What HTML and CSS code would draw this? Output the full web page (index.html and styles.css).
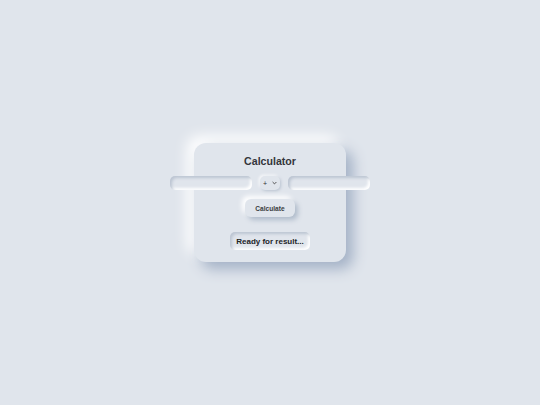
FILE: index.html
```html
<!DOCTYPE html>
<html>
<head>
<meta charset="utf-8">
<link rel="stylesheet" href="styles.css">
</head>
<body>
<div class="card">
  <h1 class="title">Calculator</h1>
  <div class="row">
    <input class="field" type="text">
    <div class="op">
      <select class="op-select"><option>+</option><option>-</option><option>×</option><option>÷</option></select>
      <svg class="chev" width="5" height="4" viewBox="0 0 5 4"><path d="M0.6 1 L2.5 2.9 L4.4 1" fill="none" stroke="#444" stroke-width="0.9"/></svg>
    </div>
    <input class="field" type="text">
  </div>
  <button class="btn">Calculate</button>
  <div class="result">Ready for result...</div>
</div>
</body>
</html>
```
FILE: styles.css
```css
html, body {
  margin: 0;
  padding: 0;
}
body {
  background: #e0e5ec;
  height: 100vh;
  display: flex;
  align-items: center;
  justify-content: center;
  font-family: "Liberation Sans", Arial, sans-serif;
  color: #2f3136;
}
.card {
  width: 152px;
  box-sizing: border-box;
  padding: 12px 16px;
  border-radius: 12px;
  background: #e0e5ec;
  box-shadow: 7px 7px 14px #a3b1c6, -7px -7px 14px #ffffff;
  display: flex;
  flex-direction: column;
  align-items: center;
}
.title {
  margin: 0 0 9px;
  font-size: 10.6px;
  line-height: 12px;
  font-weight: bold;
  color: #33353a;
}
.row {
  display: flex;
  gap: 8px;
  width: 200px;
  flex: none;
  margin-bottom: 9px;
}
.field {
  width: 82px;
  height: 14px;
  box-sizing: border-box;
  border: none;
  outline: none;
  border-radius: 5px;
  background: #e0e5ec;
  box-shadow: inset 2px 2px 3px #bcc5d2, inset -2px -2px 3px #ffffff;
  padding: 0 4px;
  margin: 0;
}
.op {
  width: 20px;
  height: 14px;
  box-sizing: border-box;
  border-radius: 5px;
  background: #e0e5ec;
  box-shadow: 1px 1px 3px #b8c2d0, -1px -1px 3px #ffffff;
  display: flex;
  align-items: center;
  justify-content: center;
  gap: 4px;
}
.op-select {
  appearance: none;
  -webkit-appearance: none;
  border: none;
  background: transparent;
  font-family: "Liberation Sans", Arial, sans-serif;
  font-size: 7px;
  color: #333;
  padding: 0;
  margin: 0;
  width: 5px;
  outline: none;
}
.chev {
  display: block;
}
.btn {
  width: 50px;
  height: 18px;
  border: none;
  border-radius: 6px;
  background: #e0e5ec;
  box-shadow: 3px 3px 5px #b0bccb, -3px -3px 5px #ffffff;
  font-family: "Liberation Sans", Arial, sans-serif;
  font-size: 6.6px;
  font-weight: bold;
  color: #3a3c40;
  padding: 0;
  margin: 0 0 15px;
}
.result {
  width: 80px;
  height: 18px;
  box-sizing: border-box;
  border-radius: 5px;
  background: #e0e5ec;
  box-shadow: inset 2px 2px 3px #bcc5d2, inset -2px -2px 3px #ffffff;
  font-size: 8px;
  font-weight: bold;
  color: #222428;
  display: flex;
  align-items: center;
  justify-content: center;
  white-space: nowrap;
}
```
